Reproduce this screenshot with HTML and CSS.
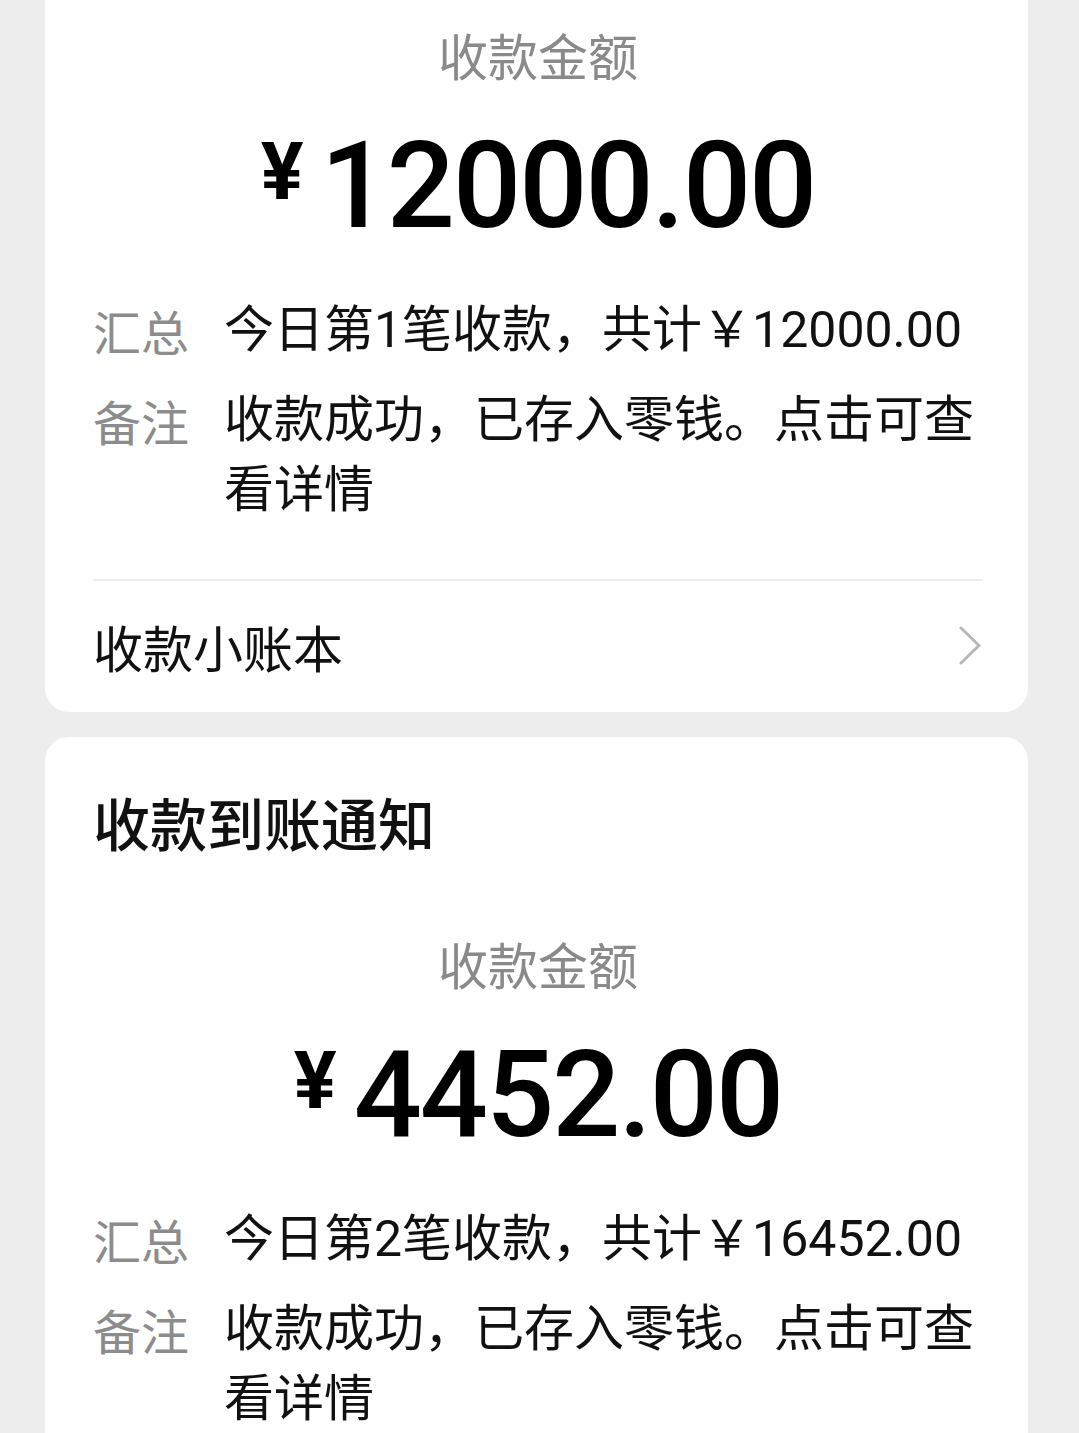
FILE: index.html
```html
<!DOCTYPE html>
<html lang="zh-CN">
<head>
<meta charset="utf-8">
<title>收款到账通知</title>
<link rel="stylesheet" href="styles.css">
</head>
<body>
<div class="page">
  <section class="card card--cut">
    <div class="amt-label">收款金额</div>
    <div class="amount"><span class="yen">¥</span><span class="num">12000.00</span></div>
    <div class="rows">
      <div class="row"><span class="row-label">汇总</span><span class="row-value">今日第1笔收款，共计￥12000.00</span></div>
      <div class="row"><span class="row-label">备注</span><span class="row-value">收款成功，已存入零钱。点击可查看详情</span></div>
    </div>
    <div class="divider"></div>
    <div class="footer">
      <span class="footer-text">收款小账本</span>
      <svg class="chev" width="26" height="40" viewBox="0 0 26 40"><path d="M3 2 L21 19.5 L3 37" fill="none" stroke="#b8b8b8" stroke-width="3" stroke-linecap="round" stroke-linejoin="round"/></svg>
    </div>
  </section>
  <section class="card card--full">
    <div class="title">收款到账通知</div>
    <div class="amt-label">收款金额</div>
    <div class="amount"><span class="yen">¥</span><span class="num">4452.00</span></div>
    <div class="rows">
      <div class="row"><span class="row-label">汇总</span><span class="row-value">今日第2笔收款，共计￥16452.00</span></div>
      <div class="row"><span class="row-label">备注</span><span class="row-value">收款成功，已存入零钱。点击可查看详情</span></div>
    </div>
    <div class="divider"></div>
    <div class="footer">
      <span class="footer-text">收款小账本</span>
      <svg class="chev" width="26" height="40" viewBox="0 0 26 40"><path d="M3 2 L21 19.5 L3 37" fill="none" stroke="#b8b8b8" stroke-width="3" stroke-linecap="round" stroke-linejoin="round"/></svg>
    </div>
  </section>
</div>
</body>
</html>
```
FILE: styles.css
```css
html, body {
  margin: 0;
  padding: 0;
  background: #ededed;
}
body {
  font-family: "Noto Sans CJK SC", "Noto Sans", sans-serif;
  color: #111;
  overflow: hidden;
}
.page {
  display: flex;
  flex-direction: column;
  gap: 25px;
  padding: 0 51px 0 45px;
}
.card {
  background: #fff;
  border-radius: 24px;
  padding: 0 45px 0 48px;
}
.card--cut {
  border-top-left-radius: 0;
  border-top-right-radius: 0;
  padding-top: 22px;
}
.card--full {
  padding-top: 44px;
}
.title {
  font-size: 57px;
  line-height: 80px;
  font-weight: 500;
  color: #111;
  margin-bottom: 70px;
}
.amt-label {
  font-size: 50px;
  line-height: 64px;
  color: #8a8a8a;
  text-align: center;
}
.amount {
  display: flex;
  justify-content: center;
  align-items: flex-start;
  margin-top: 40px;
  color: #000;
  font-family: Roboto, "Noto Sans", sans-serif;
}
.yen {
  font-size: 80px;
  line-height: 80px;
  font-weight: 700;
  margin-top: 6px;
  margin-right: 17px;
}
.num {
  font-size: 120px;
  line-height: 121px;
  font-weight: 500;
  letter-spacing: -2px;
}
.rows {
  display: flex;
  flex-direction: column;
  gap: 20px;
  margin-top: 48px;
}
.row {
  display: flex;
  gap: 35px;
  line-height: 70px;
}
.row-label {
  flex: 0 0 96px;
  font-size: 48px;
  color: #8c8c8c;
}
.row-value {
  flex: 1;
  font-size: 50px;
  color: #111;
  font-family: Roboto, "Noto Sans CJK SC", sans-serif;
}
.divider {
  height: 2px;
  background: #efefef;
  margin-top: 54px;
}
.footer {
  display: flex;
  justify-content: space-between;
  align-items: center;
  padding: 31px 0 32px;
}
.footer-text {
  font-size: 50px;
  line-height: 68px;
  color: #111;
}
.chev {
  display: block;
  margin-right: -1px;
}
```
